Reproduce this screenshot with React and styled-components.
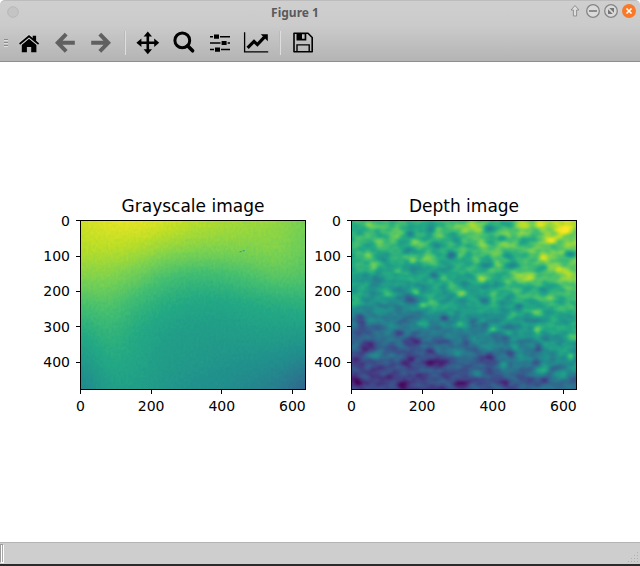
import React from 'react';
import styled, { createGlobalStyle } from 'styled-components';

const GlobalStyle = createGlobalStyle`
  * { box-sizing: border-box; }
  body { margin: 0; background: #fff; }
`;

const Window = styled.main`
  display: flex;
  flex-direction: column;
  min-height: 100vh;
  background: #fff;
  border-bottom: 2px solid #2b2b2b;
  font-family: "DejaVu Sans", sans-serif;
`;

const Chrome = styled.header`
  background: linear-gradient(#cfcfcf 0, #cbcbcb 24px, #b4b4b4 100%);
  border-top: 1px solid #bcbcbc;
  border-bottom: 1px solid #8e8e8e;
  border-radius: 5px 5px 0 0;
`;

const TitleBar = styled.div`
  display: grid;
  grid-template-columns: 24px 1fr 74px;
  align-items: center;
  height: 22px;
`;

const WindowTitle = styled.h1`
  margin: 0;
  padding-top: 2px;
  text-align: center;
  color: #5a5a5c;
  font: 700 12px/20px "Noto Sans", sans-serif;
`;

const WindowControls = styled.div`
  display: flex;
  padding-bottom: 2px;
`;

const ControlButton = styled.button`
  width: 18px;
  height: 20px;
  padding: 0;
  border: 0;
  background: none;
  svg { display: block; width: 18px; height: 20px; }
`;

const MenuButton = styled(ControlButton)`
  width: 24px;
  svg { width: 24px; }
`;

const ToolBar = styled.div`
  display: flex;
  align-items: center;
  height: 38px;
  padding-top: 2px;
`;

const Grip = styled.span`
  width: 4px;
  height: 8px;
  margin: 0 3px 0 4px;
  background: repeating-linear-gradient(#8c8c8c 0 1px, #dedede 1px 2px, transparent 2px 3px);
`;

const ToolButton = styled.button`
  width: 36px;
  height: 36px;
  padding: 6px;
  border: 0;
  background: none;
  color: ${(p) => (p.disabled ? '#606060' : '#000')};
  svg { display: block; width: 24px; height: 24px; overflow: visible; }
`;

const Separator = styled.span`
  width: 2px;
  height: 24px;
  margin: 0 4px 0 5px;
  border-left: 1px solid #bababa;
  border-right: 1px solid #dedede;
`;

const Figure = styled.section`
  flex: 1;
  display: grid;
  grid-template-columns: 1fr 1fr;
  align-content: center;
  column-gap: 6px;
  padding: 6px 63px 0 41px;
`;

const Plot = styled.figure`
  display: grid;
  grid-template-columns: 39px 1fr;
  margin: 0;
  color: #000;
  font-size: 14px;
  line-height: 16px;
`;

const PlotTitle = styled.figcaption`
  grid-column: 2;
  height: 24px;
  font-size: 17px;
  line-height: 20px;
  text-align: center;
  white-space: nowrap;
`;

const YAxis = styled.div`
  grid-column: 1;
  display: grid;
  grid-template-rows: repeat(4, 100fr) 80fr;
`;

const YTick = styled.span`
  display: flex;
  align-items: center;
  justify-content: flex-end;
  gap: 6px;
  height: 1px;
  &::after { content: ""; width: 4px; height: 1px; background: #000; }
`;

const XAxis = styled.div`
  grid-column: 2;
  display: grid;
  grid-template-columns: repeat(3, 200fr) 40fr;
  height: 24px;
`;

const XTick = styled.span`
  display: flex;
  flex-direction: column;
  align-items: center;
  gap: 4px;
  width: 1px;
  &::before { content: ""; width: 1px; height: 4px; background: #000; }
`;

const Axes = styled.div`
  aspect-ratio: 4 / 3;
  border: 1px solid #000;
  svg { display: block; width: 100%; height: 100%; }
`;

const StatusBar = styled.footer`
  display: flex;
  align-items: flex-end;
  justify-content: space-between;
  height: 22px;
  background: #cecece;
  border-top: 1px solid #b4b4b4;
  svg { display: block; margin: 0 1px 1px 0; }
`;

const StatusHandle = styled.span`
  width: 4px;
  height: 19px;
  margin-bottom: 1px;
  border: 1px solid #fff;
  border-top-color: #9c9c9c;
  border-left-color: #9c9c9c;
  background: linear-gradient(90deg, #fff 50%, #a8a8a8 50%);
`;

const BlackIcon = ({ children }) => (
  <svg viewBox="0 0 24 24" fill="currentColor" aria-hidden="true">{children}</svg>
);

const icons = {
  home: (
    <BlackIcon>
      <path d="M4.8 13.8 12 7.8l7.4 6v7.5h-5.2v-5.2h-4.3v5.2H4.8z" />
      <path d="M2.6 13 12 5.2l9.6 7.8" fill="none" stroke="#cfcfcf" strokeWidth="3.6" />
      <path d="M15.7 8V4.7h3.4V11z" />
      <path d="M2.6 13 12 5.2l9.6 7.8" fill="none" stroke="currentColor" strokeWidth="1.8" />
    </BlackIcon>
  ),
  back: <BlackIcon><path d="M13.2 3.2 4.8 11.8l8.4 8.6M5.5 11.8H21.8" fill="none" stroke="currentColor" strokeWidth="4" /></BlackIcon>,
  forward: <BlackIcon><path d="M10.8 3.2l8.4 8.6-8.4 8.6M18.5 11.8H2.2" fill="none" stroke="currentColor" strokeWidth="4" /></BlackIcon>,
  pan: (
    <BlackIcon>
      <path d="M11.8 3v18M3 11.8h18" stroke="currentColor" strokeWidth="2.6" />
      <path d="M11.8.4 16 5.4H7.6zM11.8 23.2 16 18.2H7.6zM.4 11.8l5-4.2V16zM23.2 11.8l-5-4.2V16z" />
    </BlackIcon>
  ),
  zoom: (
    <BlackIcon>
      <circle cx="10.3" cy="9.4" r="7.4" fill="none" stroke="currentColor" strokeWidth="3" />
      <path d="M15.6 14.8l5 5" stroke="currentColor" strokeWidth="3.6" strokeLinecap="round" />
    </BlackIcon>
  ),
  subplots: (
    <BlackIcon>
      <path d="M2 5h3v1.5H2zM12 5h10v1.5H12zM2 11.3h10.5v1.5H2zM19.6 11.3H22v1.5h-2.4zM2 17.8h4v1.5H2zM13 17.8h9v1.5h-9z" />
      <path d="M6 3.6h5v4.2H6zM13.6 9.9h5v4.2h-5zM7 16.5h5v4.2H7z" />
    </BlackIcon>
  ),
  edit: (
    <BlackIcon>
      <path d="M.6 1.3v19.6H24.2" fill="none" stroke="currentColor" strokeWidth="1.3" />
      <path d="M3.6 16.8 10 10.4l3.4 3.2L20.4 6.2" fill="none" stroke="currentColor" strokeWidth="3.2" />
      <path d="M16.8 3.2h7v7z" />
    </BlackIcon>
  ),
  save: (
    <BlackIcon>
      <path d="M3 2.3h14l4.2 4.2v14.2H3z" fill="none" stroke="currentColor" strokeWidth="1.6" strokeLinejoin="round" />
      <path d="M5.5 2h9.8v7.6H5.5zM11 3.2v4.5h2.6V3.2z" fillRule="evenodd" />
      <path d="M6 20.5v-6.6h12.2v6.6" fill="none" stroke="currentColor" strokeWidth="1.4" />
    </BlackIcon>
  ),
};

const tools = [
  { id: 'home', label: 'Home' },
  { id: 'back', label: 'Back', disabled: true },
  { id: 'forward', label: 'Forward', disabled: true },
  null,
  { id: 'pan', label: 'Pan' },
  { id: 'zoom', label: 'Zoom' },
  { id: 'subplots', label: 'Configure subplots' },
  { id: 'edit', label: 'Edit axes' },
  null,
  { id: 'save', label: 'Save figure' },
];

const Ring = ({ fill = '#dadada', stroke = '#858585' }) => (
  <circle cx="9" cy="10" r="6.3" fill={fill} stroke={stroke} strokeWidth="1.3" />
);

// Samples of each field every 80 data units, 0 (dark violet) to 100 (yellow).
const grayscale = [
  [93, 96, 97, 94, 90, 88, 86, 84, 79],
  [89, 90, 88, 84, 82, 81, 81, 82, 77],
  [81, 81, 77, 70, 67, 68, 71, 75, 73],
  [70, 73, 66, 61, 59, 58, 60, 61, 63],
  [60, 66, 60, 56, 55, 55, 56, 56, 55],
  [53, 61, 59, 55, 54, 52, 51, 50, 46],
  [45, 56, 56, 53, 50, 49, 46, 42, 31],
];

const depth = [
  [60, 67, 62, 64, 71, 66, 75, 83, 88],
  [61, 68, 63, 63, 66, 69, 70, 76, 76],
  [57, 57, 57, 56, 61, 63, 70, 71, 75],
  [54, 50, 45, 57, 58, 57, 57, 61, 63],
  [35, 37, 38, 40, 45, 47, 51, 56, 58],
  [22, 30, 22, 26, 34, 30, 43, 44, 51],
  [17, 21, 19, 24, 23, 26, 27, 30, 36],
];

// x, y, horizontal radius, vertical radius, value
const peaks = [
  [52, 12, 14, 8, 84], [80, 62, 13, 10, 80], [48, 97, 14, 9, 76], [60, 127, 12, 16, 78],
  [125, 35, 15, 25, 74], [132, 140, 12, 7, 80], [185, 62, 18, 8, 78], [175, 112, 11, 9, 82],
  [215, 108, 20, 14, 76], [245, 35, 12, 18, 76], [345, 22, 34, 22, 79], [372, 66, 14, 12, 81],
  [360, 92, 24, 8, 76], [412, 102, 16, 24, 79], [370, 168, 13, 9, 84], [260, 165, 13, 8, 76],
  [285, 190, 12, 9, 76], [310, 207, 12, 8, 76], [182, 203, 13, 9, 76], [200, 242, 12, 10, 78],
  [230, 235, 20, 8, 68], [205, 295, 18, 10, 62], [310, 292, 10, 8, 66], [403, 207, 10, 8, 80],
  [375, 240, 13, 7, 70], [495, 12, 24, 8, 92], [540, 8, 18, 12, 93], [605, 15, 34, 20, 95],
  [565, 56, 18, 10, 95], [548, 104, 13, 9, 99], [605, 142, 25, 9, 93], [612, 162, 20, 14, 83],
  [458, 140, 15, 6, 82], [475, 165, 10, 17, 80], [505, 160, 19, 16, 80], [565, 218, 14, 7, 78],
  [625, 218, 15, 8, 78], [610, 185, 20, 7, 76], [530, 263, 14, 9, 78], [530, 310, 10, 10, 80],
  [600, 310, 18, 8, 72], [630, 330, 18, 8, 72], [626, 390, 9, 10, 82], [402, 310, 10, 7, 72],
  [445, 319, 16, 6, 66], [385, 362, 20, 6, 62], [433, 411, 9, 8, 66], [360, 437, 15, 7, 50],
  [290, 379, 34, 7, 48], [80, 383, 48, 7, 42], [455, 268, 16, 8, 70], [545, 425, 20, 16, 58],
  [595, 440, 20, 10, 56], [320, 385, 20, 6, 46], [100, 260, 24, 8, 55], [465, 362, 10, 8, 68],
  [10, 235, 16, 9, 68], [102, 206, 18, 7, 66], [430, 60, 12, 14, 77], [485, 35, 11, 13, 80],
];

const dips = [
  [163, 37, 13, 10, 42], [285, 100, 13, 10, 30], [238, 158, 12, 9, 34], [165, 85, 24, 9, 50],
  [240, 70, 15, 12, 52], [90, 100, 14, 15, 54], [185, 140, 24, 8, 50], [75, 165, 15, 18, 44],
  [165, 225, 18, 16, 34], [35, 250, 26, 8, 38], [135, 252, 18, 8, 33], [182, 270, 16, 9, 30],
  [265, 280, 13, 9, 24], [25, 285, 16, 20, 24], [135, 322, 12, 8, 14], [45, 362, 22, 14, 9],
  [225, 372, 13, 8, 12], [163, 396, 18, 9, 0], [148, 408, 14, 8, 6], [240, 410, 34, 12, 10],
  [15, 463, 14, 10, 6], [148, 467, 14, 10, 5], [75, 425, 20, 9, 13], [65, 470, 25, 7, 14],
  [108, 445, 20, 7, 14], [310, 470, 25, 9, 10], [393, 389, 15, 8, 7], [370, 397, 15, 6, 16],
  [455, 380, 15, 8, 20], [475, 247, 13, 10, 30], [380, 230, 15, 10, 36], [345, 285, 10, 8, 34],
  [378, 300, 10, 9, 32], [440, 303, 16, 6, 30], [405, 326, 16, 7, 30], [325, 345, 10, 18, 26],
  [345, 365, 18, 7, 24], [250, 345, 28, 8, 24], [30, 319, 35, 6, 22], [170, 350, 26, 16, 20],
  [440, 340, 14, 13, 30], [495, 370, 12, 7, 28], [532, 365, 9, 11, 28], [527, 406, 13, 8, 24],
  [555, 340, 14, 7, 38], [605, 270, 18, 7, 44], [545, 198, 22, 8, 50], [455, 126, 20, 9, 42],
  [430, 50, 12, 8, 44], [490, 64, 16, 8, 54], [505, 50, 25, 8, 58], [540, 135, 18, 9, 54],
  [622, 96, 18, 9, 46], [385, 125, 25, 9, 48], [330, 105, 14, 14, 52], [450, 100, 16, 10, 52],
  [330, 185, 20, 10, 48], [375, 190, 20, 10, 48], [420, 180, 18, 10, 50], [390, 20, 16, 9, 52],
  [220, 25, 10, 16, 50], [445, 8, 22, 9, 54], [300, 60, 14, 18, 54], [440, 465, 10, 14, 11],
  [550, 460, 12, 8, 24], [320, 420, 16, 8, 20], [405, 430, 20, 7, 20], [505, 455, 20, 8, 22],
  [360, 457, 20, 7, 16], [200, 445, 22, 7, 16], [490, 345, 20, 6, 36], [300, 435, 15, 8, 20],
];

const shade = (value) => {
  const level = Math.round(value * 2.55);
  return `rgb(${level},${level},${level})`;
};

const Samples = ({ rows }) => rows.map((row, r) => row.map((value, c) => {
  const left = c === 0 ? -160 : c * 80 - 40;
  const right = c === row.length - 1 ? 800 : c * 80 + 41;
  const top = r === 0 ? -160 : r * 80 - 40;
  const bottom = r === rows.length - 1 ? 640 : r * 80 + 41;
  return <rect key={`${r}-${c}`} x={left} y={top} width={right - left} height={bottom - top} fill={shade(value)} />;
}));

const Viridis = () => (
  <feComponentTransfer>
    <feFuncR type="table" tableValues=".267 .283 .254 .207 .164 .128 .135 .267 .478 .741 .993" />
    <feFuncG type="table" tableValues=".005 .141 .265 .372 .471 .567 .659 .749 .821 .873 .906" />
    <feFuncB type="table" tableValues=".329 .458 .530 .553 .558 .551 .518 .441 .318 .150 .144" />
  </feComponentTransfer>
);

const HeatMap = ({ name, rows, spots = [], frequency, amplitude, seed }) => (
  <svg viewBox="0 0 640 480" preserveAspectRatio="none" role="img" aria-label={name}>
    <defs>
      <filter id={`${name}-soft`} filterUnits="userSpaceOnUse" x="-160" y="-160" width="960" height="800" colorInterpolationFilters="sRGB">
        <feGaussianBlur stdDeviation="34" />
      </filter>
      <filter id={`${name}-spot`} filterUnits="userSpaceOnUse" x="-40" y="-40" width="720" height="560" colorInterpolationFilters="sRGB">
        <feGaussianBlur stdDeviation="6" />
      </filter>
      <filter id={`${name}-map`} filterUnits="userSpaceOnUse" x="0" y="0" width="640" height="480" colorInterpolationFilters="sRGB">
        <feTurbulence type="fractalNoise" baseFrequency={frequency} numOctaves="2" seed={seed} />
        <feColorMatrix values="1 0 0 0 0  1 0 0 0 0  1 0 0 0 0  0 0 0 0 1" result="noise" />
        <feComposite in="SourceGraphic" in2="noise" operator="arithmetic" k1="0" k2="1" k3={amplitude} k4={-amplitude / 2} />
        <feColorMatrix values="1 0 0 0 0  1 0 0 0 0  1 0 0 0 0  0 0 0 0 1" />
        <Viridis />
      </filter>
    </defs>
    <g filter={`url(#${name}-map)`}>
      <g filter={`url(#${name}-soft)`}><Samples rows={rows} /></g>
      <g filter={`url(#${name}-spot)`}>
        {spots.map(([x, y, rx, ry, value]) => (
          <ellipse key={`${x}-${y}`} cx={x} cy={y} rx={rx} ry={ry} fill={shade(value)} />
        ))}
      </g>
    </g>
    {name === 'grayscale' && (
      <path d="M453 88h6M462 85h6" stroke="#2a9d84" strokeWidth="3" />
    )}
  </svg>
);

const Subplot = ({ title, children }) => (
  <Plot>
    <PlotTitle>{title}</PlotTitle>
    <YAxis>{[0, 100, 200, 300, 400].map((n) => <YTick key={n}>{n}</YTick>)}</YAxis>
    <Axes>{children}</Axes>
    <XAxis>{[0, 200, 400, 600].map((n) => <XTick key={n}>{n}</XTick>)}</XAxis>
  </Plot>
);

export default function App() {
  return (
    <Window>
      <GlobalStyle />
      <Chrome>
        <TitleBar>
          <MenuButton aria-label="Window menu">
            <svg viewBox="0 0 24 20"><circle cx="13" cy="10" r="5.3" fill="#c4c4c4" stroke="#b8b8b8" /></svg>
          </MenuButton>
          <WindowTitle>Figure 1</WindowTitle>
          <WindowControls>
            <ControlButton aria-label="Keep above">
              <svg viewBox="0 0 18 20"><path d="M9 4.5 13 9h-2.4v6H7.4V9H5z" fill="#dedede" stroke="#919191" /></svg>
            </ControlButton>
            <ControlButton aria-label="Minimize">
              <svg viewBox="0 0 18 20"><Ring /><path d="M5 10h8" stroke="#777" strokeWidth="1.6" /></svg>
            </ControlButton>
            <ControlButton aria-label="Restore">
              <svg viewBox="0 0 18 20"><Ring /><path d="M7.2 7H12v4.8zM6 8.2v4.8h4.8z" fill="#777" /></svg>
            </ControlButton>
            <ControlButton aria-label="Close">
              <svg viewBox="0 0 18 20"><Ring fill="#ff7722" stroke="#f47a30" /><path d="M6.5 7.5l5 5m0-5l-5 5" stroke="#fff" strokeWidth="1.7" /></svg>
            </ControlButton>
          </WindowControls>
        </TitleBar>
        <ToolBar role="toolbar" aria-label="Figure tools">
          <Grip />
          {tools.map((tool, i) => (tool
            ? <ToolButton key={tool.id} aria-label={tool.label} disabled={tool.disabled}>{icons[tool.id]}</ToolButton>
            : <Separator key={i} />))}
        </ToolBar>
      </Chrome>
      <Figure>
        <Subplot title="Grayscale image">
          <HeatMap name="grayscale" rows={grayscale} frequency="0.14 0.1" amplitude={0.05} seed="4" />
        </Subplot>
        <Subplot title="Depth image">
          <HeatMap name="depth" rows={depth} spots={[...peaks, ...dips]} frequency="0.024 0.034" amplitude={0.32} seed="7" />
        </Subplot>
      </Figure>
      <StatusBar>
        <StatusHandle />
        <svg width="12" height="12" viewBox="0 0 12 12" fill="#b0b0b0" aria-hidden="true">
          <path d="M10 1h1v1h-1zM7 4h1v1H7zM10 4h1v1h-1zM4 7h1v1H4zM7 7h1v1H7zM10 7h1v1h-1zM1 10h1v1H1zM4 10h1v1H4zM7 10h1v1H7zM10 10h1v1h-1z" />
        </svg>
      </StatusBar>
    </Window>
  );
}
